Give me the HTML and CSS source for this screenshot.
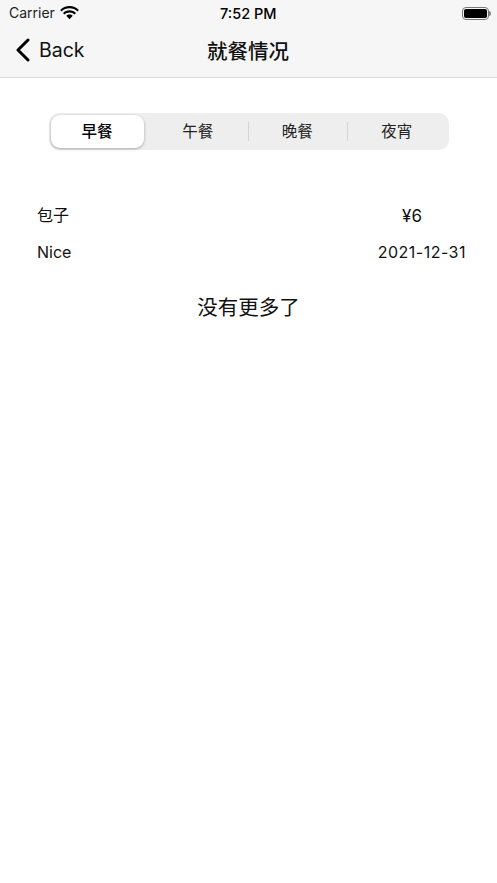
FILE: index.html
```html
<!DOCTYPE html>
<html lang="zh-CN">
  <head>
    <meta charset="UTF-8" />
    <meta name="viewport" content="width=device-width, initial-scale=1.0" />
    <title>就餐情况</title>
    <link rel="stylesheet" href="styles.css">
  </head>
  <body>
    <div class="header">
      <div class="status">
        <div class="status-left">
          <span class="carrier">Carrier</span>
          <svg class="wifi" width="19" height="14" viewBox="0 0 19 14">
            <path d="M9.5 2.2c3.1 0 5.9 1.2 8 3.2l1.3-1.4C16.4 1.6 13.1 0.1 9.5 0.1S2.6 1.6 0.2 4l1.3 1.4c2.1-2 4.9-3.2 8-3.2z"/>
            <path d="M9.5 6.4c2 0 3.8 0.8 5.1 2l1.4-1.4C14.3 5.4 12 4.3 9.5 4.3S4.7 5.4 3 7l1.4 1.4c1.3-1.2 3.1-2 5.1-2z"/>
            <path d="M9.5 8.5c-1.3 0-2.4 0.5-3.2 1.3l3.2 3.5 3.2-3.5c-0.8-0.8-1.9-1.3-3.2-1.3z"/>
          </svg>
        </div>
        <span class="time">7:52 PM</span>
        <div class="battery"><i class="level"></i></div>
      </div>
      <div class="nav">
        <div class="back">
          <svg class="chevron" width="15" height="24" viewBox="0 0 15 24">
            <path d="M13 2 L3 12 L13 22" fill="none" stroke="#000" stroke-width="3" stroke-linecap="round" stroke-linejoin="round"/>
          </svg>
          <span>Back</span>
        </div>
        <div class="title">就餐情况</div>
      </div>
    </div>

    <div class="tabs">
      <div class="tab active">早餐</div>
      <div class="tab">午餐</div>
      <div class="tab line">晚餐</div>
      <div class="tab line">夜宵</div>
    </div>

    <div class="rows">
      <div class="row">
        <span>包子</span>
        <span class="price">¥6</span>
      </div>
      <div class="row">
        <span>Nice</span>
        <span class="date">2021-12-31</span>
      </div>
    </div>

    <div class="nomore">没有更多了</div>
  </body>
</html>
```

FILE: styles.css
```css
* {
  margin: 0;
  padding: 0;
  box-sizing: border-box;
}
body {
  background-color: #fff;
  color: #000;
  font-family: Inter, "Noto Sans CJK SC", sans-serif;
}
.header {
  height: 78px;
  background-color: #f6f6f6;
  border-bottom: 1px solid #dcdcdc;
}
.status {
  height: 26px;
  display: flex;
  align-items: center;
  justify-content: space-between;
  padding: 0 8px 0 9px;
  position: relative;
}
.status-left {
  display: flex;
  align-items: center;
  gap: 5px;
}
.carrier {
  font-size: 14px;
  color: #222;
  margin-top: -2px;
}
.wifi {
  fill: #000;
  margin-top: -1px;
}
.time {
  position: absolute;
  left: 220px;
  top: 5px;
  font-size: 14.5px;
  font-weight: 500;
  line-height: 18px;
}
.battery {
  width: 27px;
  height: 13px;
  border: 1px solid #777;
  border-radius: 4px;
  padding: 1px;
  position: relative;
}
.battery:after {
  content: "";
  position: absolute;
  right: -3px;
  top: 3px;
  width: 2px;
  height: 5px;
  background-color: #888;
  border-radius: 0 2px 2px 0;
}
.level {
  display: block;
  height: 100%;
  background-color: #000;
  border-radius: 2px;
}
.nav {
  height: 47px;
  padding-right: 1px;
  position: relative;
  display: flex;
  justify-content: center;
  align-items: center;
}
.back {
  position: absolute;
  left: 15px;
  top: 12px;
  display: flex;
  align-items: center;
  gap: 9px;
  font-size: 19.5px;
  line-height: 24px;
  color: #111;
}
.title {
  font-size: 20.5px;
  font-weight: 500;
  color: #111;
}
.tabs {
  width: 400px;
  height: 37px;
  margin: 35px auto 0 auto;
  padding-right: 2px;
  background-color: #eeeeee;
  border-radius: 10px;
  display: grid;
  grid-template-columns: repeat(4, 1fr);
  align-items: center;
}
.tab {
  height: 33px;
  font-size: 15.5px;
  line-height: 33px;
  text-align: center;
  color: #222;
  position: relative;
}
.tab.active {
  margin: 0 4.5px 0 2px;
  background-color: #fff;
  border-radius: 9px;
  box-shadow: 0 1px 3px rgba(0,0,0,0.3);
  font-weight: 500;
  color: #000;
}
.line:before {
  content: "";
  position: absolute;
  left: 0;
  top: 7px;
  width: 1px;
  height: 19px;
  background-color: #d4d4d4;
}
.rows {
  margin-top: 46px;
  padding: 0 31px 0 37px;
  display: flex;
  flex-direction: column;
  gap: 2px;
}
.row {
  height: 36px;
  display: flex;
  justify-content: space-between;
  align-items: center;
  font-size: 16px;
  color: #111;
}
.price {
  width: 108px;
  padding-top: 3px;
  text-align: center;
  font-size: 17px;
}
.date {
  letter-spacing: 0.5px;
}
.nomore {
  margin-top: 24px;
  text-align: center;
  font-size: 20.5px;
  line-height: 28px;
  color: #111;
}
```
